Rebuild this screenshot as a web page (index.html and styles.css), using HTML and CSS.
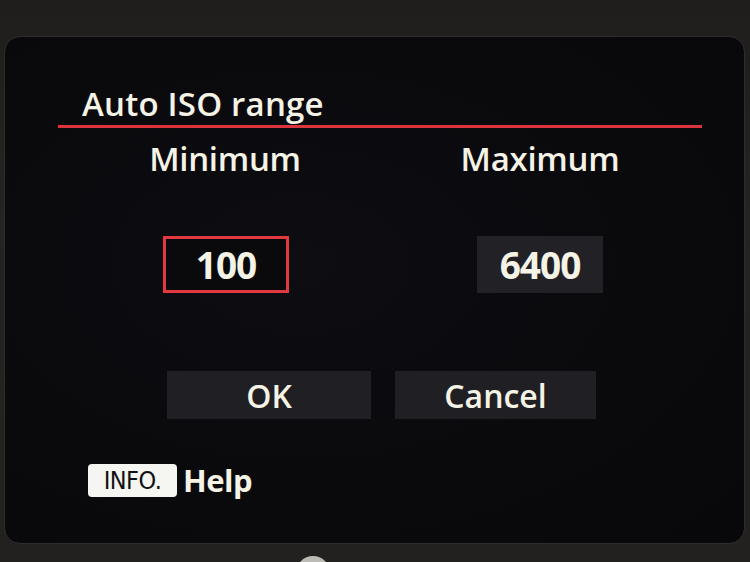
FILE: index.html
```html
<!DOCTYPE html>
<html lang="en">
<head>
  <meta charset="UTF-8" />
  <meta name="viewport" content="width=device-width, initial-scale=1" />
  <title>Auto ISO range</title>
  <link rel="stylesheet" href="styles.css">
</head>
<body>
  <div class="bezel">
    <div class="screen">
      <div class="header">
        <h1>Auto ISO range</h1>
      </div>
      <div class="ranges">
        <div class="range">
          <div class="range-label">Minimum</div>
          <div class="range-value selected">100</div>
        </div>
        <div class="range">
          <div class="range-label">Maximum</div>
          <div class="range-value">6400</div>
        </div>
      </div>
      <div class="actions">
        <div class="btn btn-ok">OK</div>
        <div class="btn btn-cancel">Cancel</div>
      </div>
      <div class="help">
        <span class="info-key">INFO.</span>
        <span class="help-text">Help</span>
      </div>
    </div>
    <div class="bezel-bottom">
      <span class="dial"></span>
    </div>
  </div>
</body>
</html>
```

FILE: styles.css
```css
body {
  margin: 0;
  height: 562px;
  overflow: hidden;
  background: #23211f;
  font-family: "Open Sans", "Noto Sans", sans-serif;
  color: #f5f3e6;
}
.bezel {
  height: 562px;
  padding: 36px 5px 0 4px;
  box-sizing: border-box;
  background: linear-gradient(180deg, #1f1e1c 0%, #262422 40%, #222120 100%);
}
.screen {
  height: 508px;
  box-sizing: border-box;
  padding-top: 47px;
  border: 1px solid #2e2d2b;
  border-radius: 16px;
  background: radial-gradient(ellipse at 40% 45%, #0d0d12 0%, #0a0a0d 60%, #08080a 100%);
}
.header {
  margin: 0 42px 0 53px;
  padding: 0 0 1px 24px;
  border-bottom: 3px solid #dc343d;
}
h1 {
  margin: 0;
  font-size: 33px;
  line-height: 40px;
  font-weight: 600;
  letter-spacing: 0.2px;
}
.ranges {
  display: flex;
  gap: 65px;
  padding-left: 95px;
  margin-top: 11px;
}
.range {
  width: 250px;
  display: flex;
  flex-direction: column;
  align-items: center;
}
.range-label {
  font-size: 33px;
  line-height: 40px;
  font-weight: 600;
  letter-spacing: -0.3px;
}
.range-value {
  margin-top: 57px;
  width: 126px;
  height: 57px;
  box-sizing: border-box;
  display: flex;
  align-items: center;
  justify-content: center;
  background: #222226;
  font-size: 37px;
  font-weight: 700;
  letter-spacing: -1px;
}
.range-value.selected {
  background: #0a0a0d;
  border: 3px solid #e23840;
  margin-left: 2px;
}
.actions {
  display: flex;
  gap: 24px;
  margin-top: 78px;
  padding-left: 162px;
}
.btn {
  height: 48px;
  display: flex;
  align-items: center;
  justify-content: center;
  background: #202024;
  font-size: 32px;
  font-weight: 600;
}
.btn-ok {
  width: 204px;
}
.btn-cancel {
  width: 201px;
}
.help {
  display: flex;
  align-items: center;
  gap: 6px;
  margin-top: 40px;
  padding-left: 83px;
}
.info-key {
  width: 89px;
  height: 33px;
  display: flex;
  align-items: center;
  justify-content: center;
  background: #f5f5f2;
  border-radius: 4px;
  color: #111;
  font-family: "Liberation Sans Narrow", "DejaVu Sans Condensed", sans-serif;
  font-size: 25px;
  font-weight: 400;
  letter-spacing: -0.5px;
}
.help-text {
  font-size: 31px;
  font-weight: 700;
  letter-spacing: -0.5px;
}
.bezel-bottom {
  padding: 12px 0 0 292px;
}
.dial {
  display: block;
  width: 34px;
  height: 34px;
  border-radius: 50%;
  background: #bdbbb6;
}
```
